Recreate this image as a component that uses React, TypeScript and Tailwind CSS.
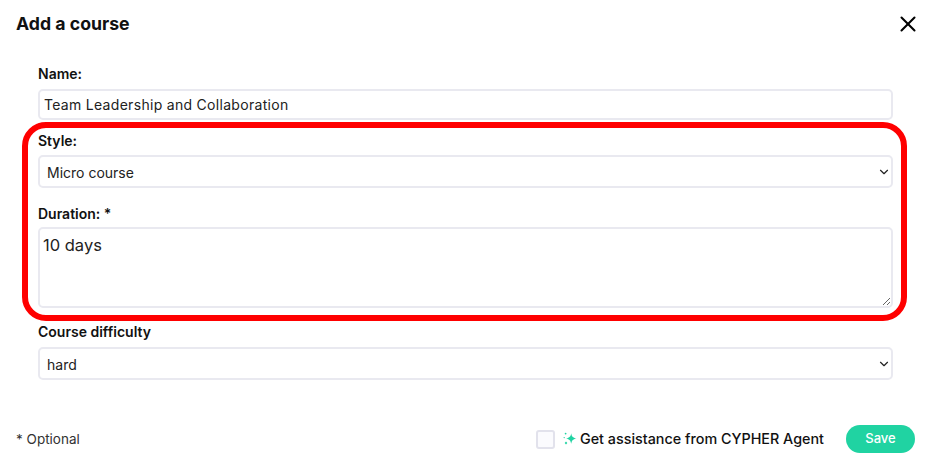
import { ChevronDown, X } from "lucide-react";

const font = { fontFamily: "Inter, 'Open Sans', sans-serif" };

const fieldCls = "block w-full text-[#222] bg-white border-2 border-[#e9e9f0] rounded-[5px] outline-none";

function Label({ children, className = "" }: { children: React.ReactNode; className?: string }) {
  return <label className={`block h-[20px] text-[14px] leading-[20px] font-semibold text-[#111] ${className}`}>{children}</label>;
}

function Select({ value, className = "" }: { value: string; className?: string }) {
  return (
    <div className={`relative ${className}`}>
      <select defaultValue={value} className={`${fieldCls} appearance-none h-[33px] px-[7px] pt-[1px] text-[14px]`}>
        <option>{value}</option>
      </select>
      <ChevronDown size={14} strokeWidth={2} className="absolute right-[1px] top-[10px] mr-[1px] text-[#222] pointer-events-none" />
    </div>
  );
}

function Sparkle() {
  return (
    <svg width="14" height="14" viewBox="0 0 14 14" className="text-[#20d3a2]" fill="currentColor">
      <path d="M8.2 1.2 C8.8 4.6 9.7 5.6 13.4 6.5 C9.7 7.4 8.8 8.4 8.2 11.8 C7.6 8.4 6.7 7.4 3 6.5 C6.7 5.6 7.6 4.6 8.2 1.2 Z" />
      <circle cx="2.6" cy="1.6" r="0.9" />
      <circle cx="1.2" cy="5.6" r="0.7" />
      <path d="M3 9.4 L4.3 11 L3 12.6 L1.7 11 Z" />
    </svg>
  );
}

export default function App() {
  return (
    <main className="relative w-[931px] h-[470px] bg-white overflow-hidden text-[#111]" style={font}>
      <header className="flex items-center justify-between h-[48px] pl-[16px] pr-[10px]">
        <h1 className="text-[17.7px] font-bold">Add a course</h1>
        <button className="text-black"><X size={26} strokeWidth={1.9} /></button>
      </header>

      <form className="px-[38px] pt-[16px]">
        <Label>Name:</Label>
        <input
          defaultValue="Team Leadership and Collaboration"
          className={`${fieldCls} mt-[5px] h-[31px] px-[4px] text-[14px] tracking-[0.3px]`}
        />

        <Label className="mt-[11px]">Style:</Label>
        <Select value="Micro course" className="mt-[4px]" />

        <Label className="mt-[16px]">Duration: *</Label>
        <textarea
          defaultValue="10 days"
          className={`${fieldCls} mt-[3px] h-[81px] px-[3px] py-[4px] text-[16.5px] leading-[24px]`}
        />

        <Label className="mt-[14px]">Course difficulty</Label>
        <Select value="hard" className="mt-[5px]" />
      </form>

      <footer className="flex items-center justify-between px-[16px] mt-[45px]">
        <span className="text-[13.5px] text-[#333]">* Optional</span>
        <div className="flex items-center">
          <span className="w-[19px] h-[19px] border-2 border-[#e2e2ec] bg-[#fbfbfe] rounded-[3px]" />
          <span className="ml-[8px] flex"><Sparkle /></span>
          <span className="ml-[3px] text-[14.35px] font-medium text-[#111]">Get assistance from CYPHER Agent</span>
          <button type="button" className="ml-[22px] w-[69px] h-[28px] rounded-full bg-[#20d3a2] text-white text-[13px] font-medium">Save</button>
        </div>
      </footer>

      {/* red annotation drawn over the form */}
      <div className="absolute left-[22px] top-[122px] w-[885px] h-[199px] border-[6px] border-[#ff0000] rounded-[24px] pointer-events-none" />
    </main>
  );
}
